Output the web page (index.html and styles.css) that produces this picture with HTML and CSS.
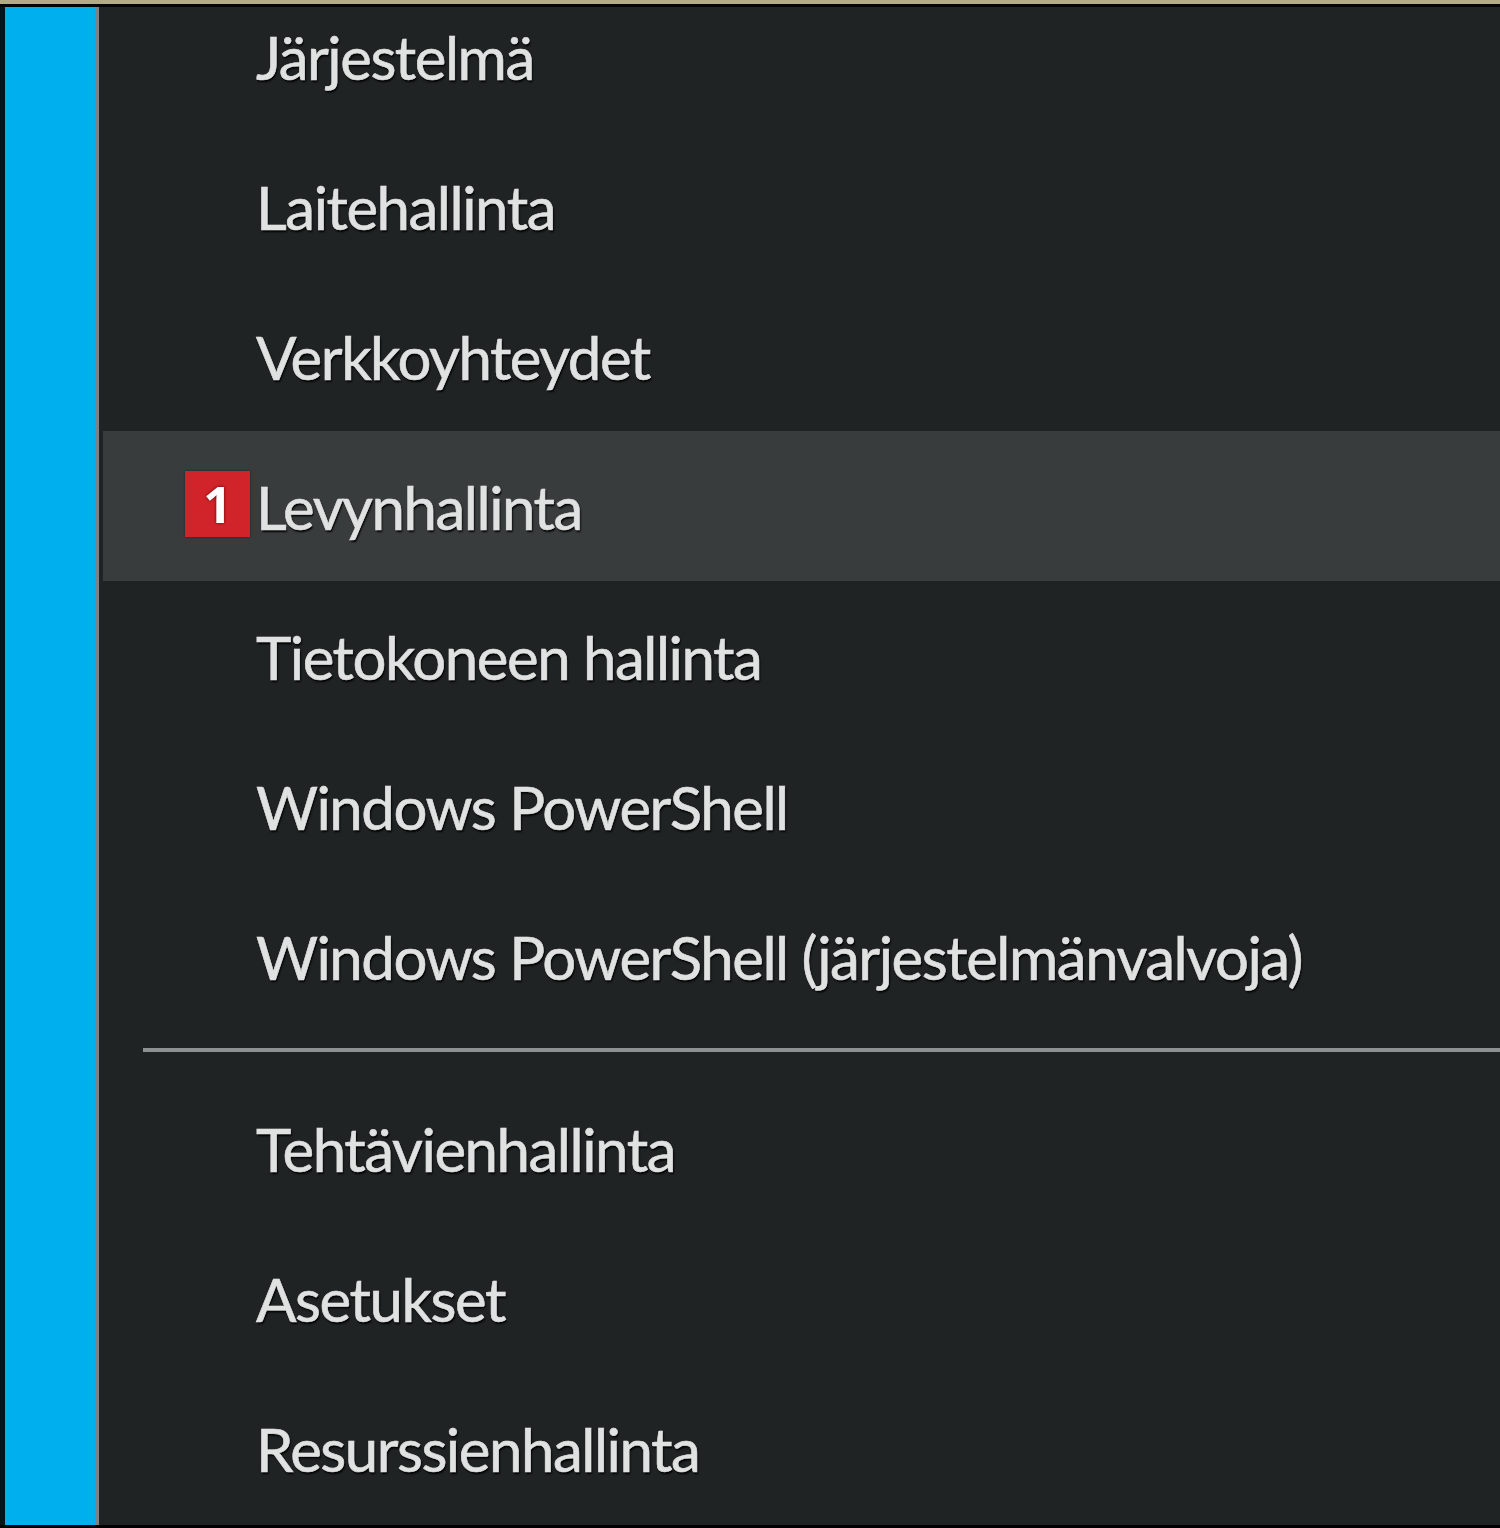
FILE: index.html
```html
<!DOCTYPE html>
<html>
<head>
  <title>Pikalinkkivalikko</title>
  <link rel="stylesheet" href="styles.css">
</head>
<body>
  <div class="topline"></div>
  <div class="screen">
    <div class="accent"></div>
    <div class="menu">
      <ul class="items">
        <li class="item">Järjestelmä</li>
        <li class="item">Laitehallinta</li>
        <li class="item">Verkkoyhteydet</li>
        <li class="item active"><span class="badge">1</span>Levynhallinta</li>
        <li class="item">Tietokoneen hallinta</li>
        <li class="item">Windows PowerShell</li>
        <li class="item">Windows PowerShell (järjestelmänvalvoja)</li>
        <li class="separator"></li>
        <li class="item">Tehtävienhallinta</li>
        <li class="item">Asetukset</li>
        <li class="item">Resurssienhallinta</li>
      </ul>
    </div>
  </div>
</body>
</html>
```

FILE: styles.css
```css
body {
  margin: 0;
  background-color: #000;
  font-family: "Lato", "Open Sans", sans-serif;
  height: 1528px;
  overflow: hidden;
}

.topline {
  height: 4px;
  background-color: #b3ab86;
  border-bottom: 3px solid #050505;
}

.screen {
  display: flex;
  height: 1518px;
}

.accent {
  width: 90px;
  background-color: #00b0ee;
  border-left: 5px solid #06141c;
  border-right: 4px solid #7d8384;
}

.menu {
  flex: 1;
  background-color: #1f2324;
  overflow: hidden;
}

.items {
  list-style: none;
  margin: -26px 0 0 0;
  padding: 0;
}

.item {
  position: relative;
  display: flex;
  align-items: center;
  height: 150px;
  margin-left: 4px;
  padding-left: 153px;
  padding-top: 2px;
  box-sizing: border-box;
  font-size: 60px;
  letter-spacing: -1.5px;
  color: #e0e1e1;
  -webkit-text-stroke: 0.6px #e0e1e1;
  text-shadow: 1px 2px 2px #000;
  white-space: nowrap;
}

.item.active {
  background-color: #393c3d;
}

.badge {
  position: absolute;
  left: 82px;
  top: 40px;
  width: 65px;
  height: 66px;
  background-color: #d1232a;
  color: #fff;
  -webkit-text-stroke: 0;
  font-family: "Open Sans", sans-serif;
  font-weight: bold;
  font-size: 50px;
  letter-spacing: 0;
  line-height: 66px;
  text-align: center;
  box-shadow: 0 0 2px #0a2a2a;
  text-shadow: 0 0 3px #5a0000;
}

.separator {
  height: 42px;
  margin-left: 44px;
  box-sizing: border-box;
  padding-top: 17px;
}

.separator::after {
  content: "";
  display: block;
  height: 4px;
  background-color: #8e9191;
}
```
